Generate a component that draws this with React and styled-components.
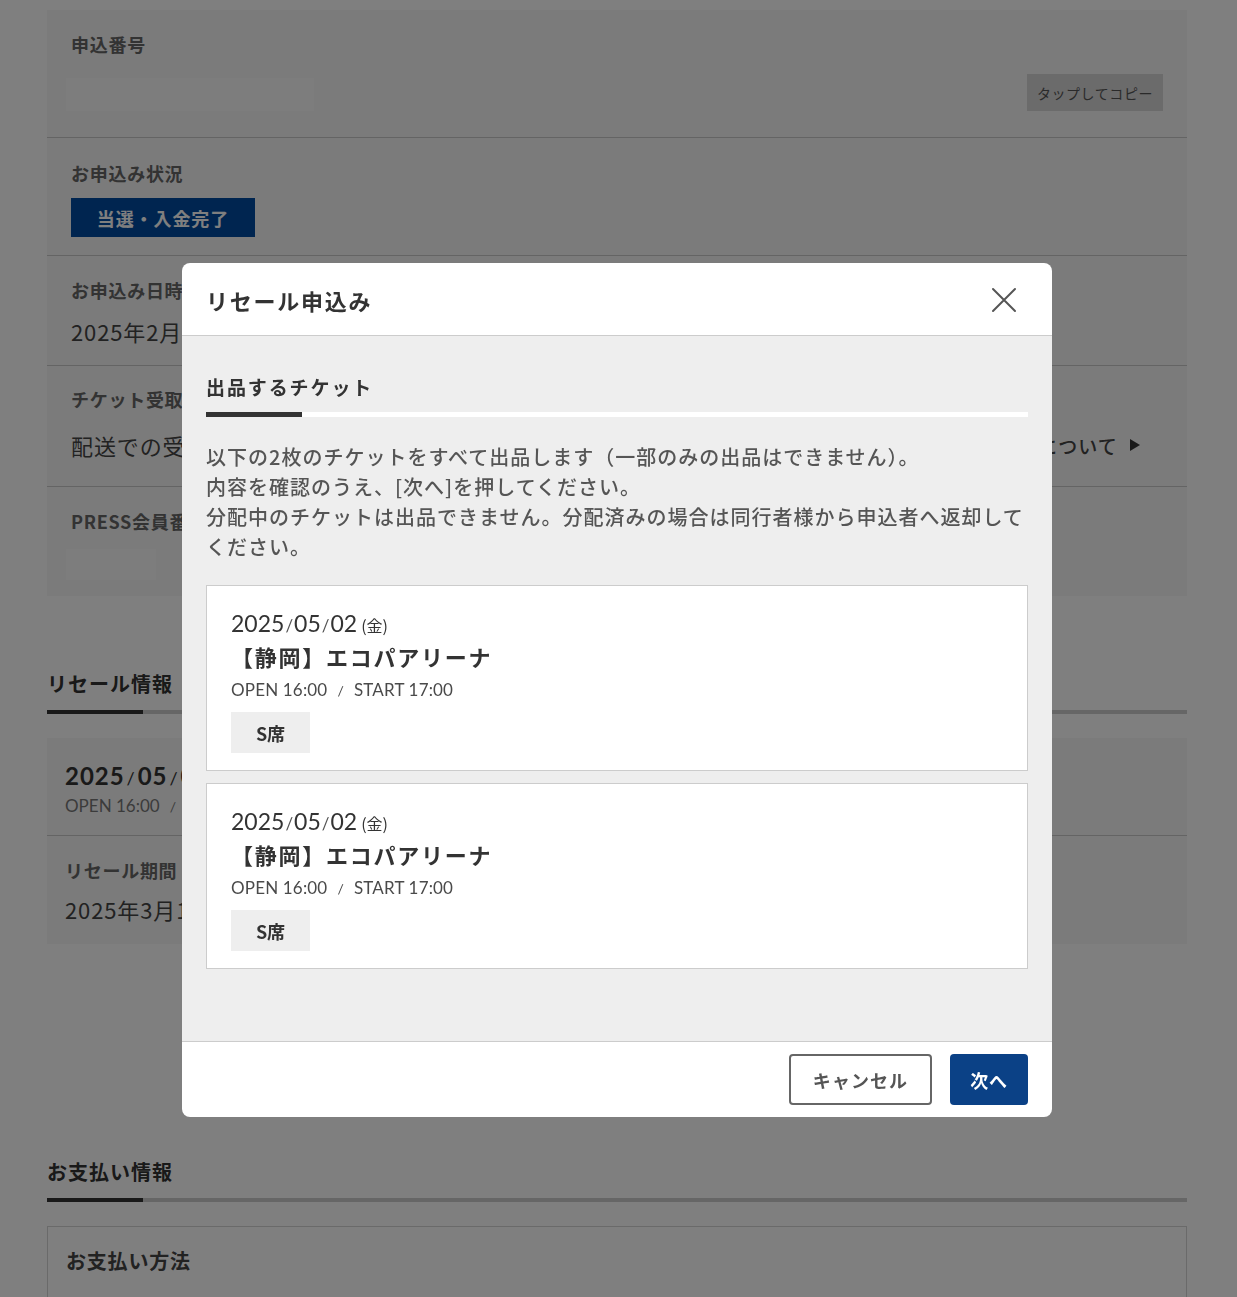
import React from "react";
import styled, { createGlobalStyle } from "styled-components";

const GlobalStyle = createGlobalStyle`
  html, body {
    margin: 0;
    padding: 0;
    overflow: hidden;
    background: #ffffff;
  }
  body {
    font-family: "Noto Sans CJK JP", "Noto Sans", sans-serif;
    color: #333333;
  }
  * { box-sizing: border-box; }
  p { margin: 0; }
`;

const tickets = [
  { date: ["2025", "05", "02"], week: "金", venue: "【静岡】エコパアリーナ", open: "16:00", start: "17:00", seat: "S席" },
  { date: ["2025", "05", "02"], week: "金", venue: "【静岡】エコパアリーナ", open: "16:00", start: "17:00", seat: "S席" },
];

function TicketDate({ parts, week }) {
  return (
    <DateLine>
      {parts.map((p, i) => (
        <React.Fragment key={i}>
          {i > 0 && <Slash>/</Slash>}
          {p}
        </React.Fragment>
      ))}
      <Week>({week})</Week>
    </DateLine>
  );
}

function TicketCard({ ticket }) {
  return (
    <Card>
      <TicketDate parts={ticket.date} week={ticket.week} />
      <Venue>{ticket.venue}</Venue>
      <Times>
        OPEN {ticket.open}
        <TimeSep>/</TimeSep>
        START {ticket.start}
      </Times>
      <SeatTag>{ticket.seat}</SeatTag>
    </Card>
  );
}

function CloseIcon() {
  return (
    <svg width="26" height="26" viewBox="0 0 26 26" fill="none">
      <path d="M2 2 L24 24 M24 2 L2 24" stroke="#555555" strokeWidth="2" strokeLinecap="round" />
    </svg>
  );
}

function PlayArrow() {
  return (
    <svg width="10" height="12" viewBox="0 0 10 12">
      <path d="M0 0 L10 6 L0 12 Z" fill="#333333" />
    </svg>
  );
}

export default function App() {
  return (
    <>
      <GlobalStyle />
      <Page>
        <InfoPanel>
          <InfoRow $pt={22} $pb={26}>
            <RowLabel $gap={21}>申込番号</RowLabel>
            <RowLine>
              <Placeholder $w={248} $h={33} />
              <CopyButton type="button">タップしてコピー</CopyButton>
            </RowLine>
          </InfoRow>
          <InfoRow $pt={23} $pb={18}>
            <RowLabel $gap={13}>お申込み状況</RowLabel>
            <StatusBadge>当選・入金完了</StatusBadge>
          </InfoRow>
          <InfoRow $pt={22} $pb={19}>
            <RowLabel>お申込み日時</RowLabel>
            <RowValue>2025年2月20日 12:34</RowValue>
          </InfoRow>
          <InfoRow $pt={21} $pb={26}>
            <RowLabel $gap={19}>チケット受取方法</RowLabel>
            <RowLine>
              <RowValue>配送での受取</RowValue>
              <MoreLink>
                チケットの配送について
                <Arrow><PlayArrow /></Arrow>
              </MoreLink>
            </RowLine>
          </InfoRow>
          <InfoRow $pt={22} $pb={16}>
            <RowLabel $gap={16}>PRESS会員番号</RowLabel>
            <Placeholder $w={90} $h={31} />
          </InfoRow>
        </InfoPanel>

        <SectionTitle>リセール情報</SectionTitle>
        <TabBar />
        <ResalePanel>
          <InfoRow $pt={22} $pb={16}>
            <BigDate>2025<BigSlash>/</BigSlash>05<BigSlash>/</BigSlash>02(金)</BigDate>
            <SmallTimes>OPEN 16:00<TimeSep>/</TimeSep>START 17:00</SmallTimes>
          </InfoRow>
          <InfoRow $pt={22} $pb={20}>
            <RowLabel $gap={12}>リセール期間</RowLabel>
            <RowValue>2025年3月1日 10:00 〜 2025年3月31日 23:59</RowValue>
          </InfoRow>
        </ResalePanel>

        <SectionTitle $mt={214}>お支払い情報</SectionTitle>
        <TabBar />
        <PayBox>
          <PayLabel>お支払い方法</PayLabel>
        </PayBox>
      </Page>

      <Overlay>
        <Modal>
          <ModalHeader>
            <ModalTitle>リセール申込み</ModalTitle>
            <CloseButton type="button" aria-label="閉じる">
              <CloseIcon />
            </CloseButton>
          </ModalHeader>
          <ModalBody>
            <BodyHeading>出品するチケット</BodyHeading>
            <TabBar $light />
            <Notice>
              以下の2枚のチケットをすべて出品します（一部のみの出品はできません）。
              <br />
              内容を確認のうえ、[次へ]を押してください。
              <br />
              分配中のチケットは出品できません。分配済みの場合は同行者様から申込者へ返却してください。
            </Notice>
            <CardList>
              {tickets.map((t, i) => (
                <TicketCard key={i} ticket={t} />
              ))}
            </CardList>
          </ModalBody>
          <ModalFooter>
            <CancelButton type="button">キャンセル</CancelButton>
            <NextButton type="button">次へ</NextButton>
          </ModalFooter>
        </Modal>
      </Overlay>
    </>
  );
}

/* ===== background page ===== */
const Page = styled.div`
  width: 1140px;
  margin-left: 47px;
  padding-top: 10px;
`;

const InfoPanel = styled.div`
  background: #f6f6f6;
`;

const InfoRow = styled.div`
  padding: ${(p) => p.$pt}px 24px ${(p) => p.$pb}px 19px;
  border-top: 1px solid #c8c8c8;
  &:first-child { border-top: none; }
`;

const RowLabel = styled.p`
  margin: 0 0 ${(p) => p.$gap ?? 14}px 5px;
  font-size: 18px;
  line-height: 24px;
  font-weight: 700;
  letter-spacing: 0.04em;
  color: #666666;
`;

const RowLine = styled.div`
  display: flex;
  align-items: center;
  justify-content: space-between;
`;

const RowValue = styled.p`
  margin-left: 5px;
  font-size: 22px;
  line-height: 30px;
  letter-spacing: 0.04em;
  color: #444444;
`;

const ResalePanel = styled(InfoPanel)`
  margin-top: 24px;
  ${InfoRow} { padding-left: 18px; }
  ${RowLabel}, ${RowValue} { margin-left: 0; }
`;

const Placeholder = styled.div`
  width: ${(p) => p.$w}px;
  height: ${(p) => p.$h}px;
  background: #fafafa;
`;

const CopyButton = styled.button`
  height: 37px;
  margin-top: -3px;
  padding: 0 10px;
  border: none;
  background: #d6d6d6;
  font-family: inherit;
  font-size: 14px;
  letter-spacing: 0.04em;
  color: #555555;
`;

const StatusBadge = styled.div`
  display: inline-flex;
  align-items: center;
  justify-content: center;
  width: 184px;
  height: 39px;
  margin-left: 5px;
  background: #004aa0;
  color: #ffffff;
  font-size: 18px;
  font-weight: 700;
  letter-spacing: 0.05em;
`;

const MoreLink = styled.span`
  display: inline-flex;
  align-items: center;
  margin-right: 23px;
  font-size: 19px;
  font-weight: 500;
  letter-spacing: 0.06em;
  color: #444444;
`;

const Arrow = styled.span`
  display: inline-flex;
  margin-left: 12px;
`;

const SectionTitle = styled.h2`
  margin: ${(p) => p.$mt ?? 74}px 0 0;
  font-size: 20px;
  line-height: 28px;
  font-weight: 700;
  letter-spacing: 0.05em;
  color: #333333;
`;

const TabBar = styled.div`
  position: relative;
  height: ${(p) => (p.$light ? 5 : 4)}px;
  margin-top: 12px;
  background: ${(p) => (p.$light ? "#ffffff" : "#cccccc")};
  &::before {
    content: "";
    position: absolute;
    left: 0;
    top: 0;
    bottom: 0;
    width: 96px;
    background: #333333;
  }
`;

const BigDate = styled.p`
  font-family: Lato, "Noto Sans CJK JP", sans-serif;
  font-size: 24px;
  line-height: 32px;
  font-weight: 700;
  letter-spacing: 0.04em;
  color: #333333;
`;

const BigSlash = styled.span`
  font-weight: 400;
  font-size: 18px;
  margin: 0 2px;
`;

const SmallTimes = styled.p`
  font-family: Lato, sans-serif;
  font-size: 17px;
  line-height: 24px;
  color: #777777;
`;

const PayBox = styled.div`
  margin-top: 24px;
  border: 1px solid #d4d4d4;
  padding: 20px 18px;
  height: 120px;
`;

const PayLabel = styled.p`
  font-size: 20px;
  line-height: 28px;
  font-weight: 700;
  letter-spacing: 0.04em;
  color: #444444;
`;

/* ===== modal ===== */
const Overlay = styled.div`
  position: fixed;
  inset: 0;
  background: rgba(0, 0, 0, 0.5);
  display: flex;
  justify-content: center;
  align-items: flex-start;
  padding-top: 263px;
`;

const Modal = styled.div`
  width: 870px;
  margin-left: -3px;
  background: #ffffff;
  border-radius: 8px;
  overflow: hidden;
`;

const ModalHeader = styled.div`
  display: flex;
  align-items: center;
  justify-content: space-between;
  height: 73px;
  padding: 2px 35px 0 24px;
  border-bottom: 1px solid #cccccc;
`;

const ModalTitle = styled.h1`
  margin: 0;
  font-size: 22px;
  font-weight: 700;
  letter-spacing: 0.08em;
  color: #333333;
`;

const CloseButton = styled.button`
  display: flex;
  padding: 0;
  border: none;
  background: none;
  cursor: pointer;
`;

const ModalBody = styled.div`
  background: #eeeeee;
  padding: 38px 24px 72px;
`;

const BodyHeading = styled.h2`
  margin: 0;
  font-size: 19px;
  line-height: 26px;
  font-weight: 700;
  letter-spacing: 0.1em;
  color: #333333;
`;

const Notice = styled.p`
  margin: 25px 0 23px;
  font-size: 20px;
  line-height: 30px;
  font-weight: 500;
  letter-spacing: 0.05em;
  color: #555555;
`;

const CardList = styled.div`
  display: flex;
  flex-direction: column;
  gap: 12px;
`;

const Card = styled.div`
  background: #ffffff;
  border: 1px solid #cccccc;
  padding: 21px 24px 17px;
`;

const DateLine = styled.p`
  height: 33px;
  font-family: Lato, "Noto Sans CJK JP", sans-serif;
  font-size: 23px;
  line-height: 33px;
  color: #333333;
`;

const Slash = styled.span`
  font-size: 17px;
  line-height: 1;
  margin: 0 1px;
  color: #555555;
`;

const Week = styled.span`
  margin-left: 4px;
  font-family: "Noto Sans CJK JP", sans-serif;
  font-size: 16px;
  line-height: 1;
`;

const Venue = styled.p`
  height: 33px;
  font-size: 22px;
  line-height: 33px;
  font-weight: 700;
  letter-spacing: 0.08em;
  color: #333333;
`;

const Times = styled.p`
  height: 33px;
  font-family: Lato, sans-serif;
  font-size: 17px;
  line-height: 33px;
  letter-spacing: 0.01em;
  color: #4a4a4a;
`;

const TimeSep = styled.span`
  margin: 0 10px;
  font-size: 14px;
`;

const SeatTag = styled.div`
  display: flex;
  align-items: center;
  justify-content: center;
  width: 79px;
  height: 41px;
  margin-top: 6px;
  background: #eeeeee;
  font-size: 18px;
  font-weight: 700;
  color: #333333;
`;

const ModalFooter = styled.div`
  display: flex;
  justify-content: flex-end;
  gap: 18px;
  padding: 12px 24px 12px;
  border-top: 1px solid #cccccc;
`;

const CancelButton = styled.button`
  width: 143px;
  height: 51px;
  border: 2px solid #666666;
  border-radius: 4px;
  background: #ffffff;
  font-family: inherit;
  font-size: 18px;
  font-weight: 700;
  letter-spacing: 0.06em;
  color: #555555;
  cursor: pointer;
`;

const NextButton = styled.button`
  width: 78px;
  height: 51px;
  border: none;
  border-radius: 4px;
  background: #0b4186;
  font-family: inherit;
  font-size: 18px;
  font-weight: 700;
  letter-spacing: 0.04em;
  color: #ffffff;
  cursor: pointer;
`;
